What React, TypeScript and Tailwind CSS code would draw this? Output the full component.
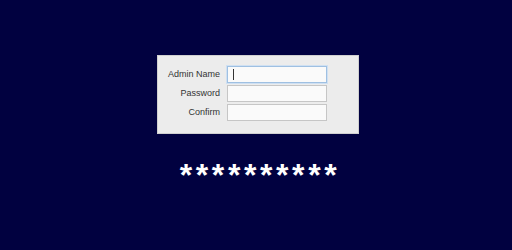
export default function App() {
  const rows = ["Admin Name", "Password", "Confirm"];
  return (
    <div className="w-[512px] h-[250px] bg-[#010140] flex flex-col items-center pt-[55px] pl-[4px] font-['Liberation_Sans',Arial,sans-serif]">
      <div className="w-[202px] h-[79px] bg-[#ececec] border border-[#d0d0d0] pt-[10px] flex flex-col gap-[2px]">
        {rows.map((label, i) => (
          <div key={label} className="flex items-center h-[17px]">
            <span className="w-[62px] text-right text-[9px] text-[#333] leading-none">{label}</span>
            <div
              className={
                "ml-[7px] w-[100px] h-[17px] bg-[#fafafa] border flex items-center " +
                (i === 0 ? "border-[#9fc0e2] shadow-[0_0_0_1px_#cfe0f2]" : "border-[#c6c6c6]")
              }
            >
              {i === 0 && <span className="ml-[5px] w-px h-[11px] bg-[#333]" />}
            </div>
          </div>
        ))}
      </div>
      <div className="mt-[25px] text-white font-bold text-[32px] leading-none tracking-[3.6px] pl-[4px]">
        **********
      </div>
    </div>
  );
}
